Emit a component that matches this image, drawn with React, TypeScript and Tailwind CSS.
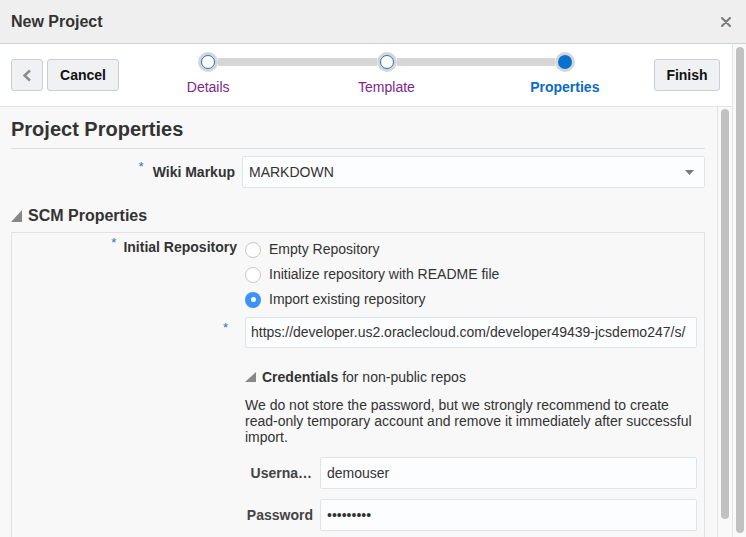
import React from "react";

function Step({ label, current, left, right }: { label: string; current?: boolean; left?: boolean; right?: boolean }) {
  return (
    <div className="flex-1 flex flex-col items-center">
      <div className="flex items-center w-full h-[20px]">
        <div className={left ? "flex-1 h-[8px] bg-[#d6d6d6]" : "flex-1 h-[8px]"} />
        <div className="w-[20px] h-[20px] rounded-full bg-[#d6d6d6] flex items-center justify-center shrink-0">
          {current ? (
            <div className="w-[14px] h-[14px] rounded-full bg-[#0572ce]" />
          ) : (
            <div className="w-[14px] h-[14px] rounded-full bg-white border-[1.5px] border-[#1b74d0]" />
          )}
        </div>
        <div className={right ? "flex-1 h-[8px] bg-[#d6d6d6]" : "flex-1 h-[8px]"} />
      </div>
      <div
        className={
          current
            ? "mt-[7px] text-[14px] leading-[16px] font-bold text-[#0a6bc2]"
            : "mt-[7px] text-[14px] leading-[16px] text-[#7d268c]"
        }
      >
        {label}
      </div>
    </div>
  );
}

function Radio({ checked, label }: { checked?: boolean; label: string }) {
  return (
    <div className="h-[25px] flex items-center">
      {checked ? (
        <div className="w-[16px] h-[16px] rounded-full bg-[#3a93f5] flex items-center justify-center">
          <div className="w-[5px] h-[5px] rounded-full bg-white" />
        </div>
      ) : (
        <div className="w-[16px] h-[16px] rounded-full bg-white border border-[#c9c9c9]" />
      )}
      <span className="ml-[8px] text-[14px] text-[#333]">{label}</span>
    </div>
  );
}

function Field({ children }: { children: React.ReactNode }) {
  return (
    <div className="flex-1 min-w-0 h-[32px] border border-[#dfe4e8] bg-[#fcfdfe] rounded-[2px] flex items-center pl-[6px] overflow-hidden whitespace-nowrap text-[14px] text-[#333]">
      {children}
    </div>
  );
}

export default function App() {
  return (
    <div className="w-[746px] h-[537px] overflow-hidden flex flex-col bg-white text-[#333] font-['Liberation_Sans',Arial,sans-serif]">
      {/* Header */}
      <div className="h-[44px] shrink-0 bg-[#efefef] border-b border-[#cbd3da] flex items-center justify-between pl-[11px] pr-[15px]">
        <span className="text-[16px] font-bold text-[#333]">New Project</span>
        <svg width="10" height="10" viewBox="0 0 10 10" className="mt-[1px]">
          <path d="M1 1 L9 9 M9 1 L1 9" stroke="#7a7a7a" strokeWidth="2" strokeLinecap="round" />
        </svg>
      </div>

      <div className="flex flex-1 min-h-0">
        <div className="flex-1 min-w-0 flex flex-col">
          {/* Toolbar */}
          <div className="h-[63px] shrink-0 bg-white border-b border-[#e2e2e2] flex items-start pl-[11px] pr-[12px]">
            <div className="mt-[15px] w-[32px] h-[32px] border border-[#c5ced6] bg-[#eff1f3] rounded-[3px] flex items-center justify-center">
              <svg width="10" height="13" viewBox="0 0 10 13">
                <path d="M8 1.5 L2.5 6.5 L8 11.5" stroke="#8a8a8a" strokeWidth="2.4" fill="none" />
              </svg>
            </div>
            <div className="mt-[15px] ml-[4px] w-[72px] h-[32px] border border-[#c5ced6] bg-[#eff1f3] rounded-[3px] flex items-center justify-center text-[14px] font-bold text-[#111]">
              Cancel
            </div>
            <div className="w-[535px] pt-[8px] flex">
              <Step label="Details" right />
              <Step label="Template" left right />
              <Step label="Properties" current left />
            </div>
            <div className="mt-[15px] w-[66px] h-[32px] border border-[#c5ced6] bg-[#eff1f3] rounded-[3px] flex items-center justify-center text-[14px] font-bold text-[#111]">
              Finish
            </div>
          </div>

          {/* Content */}
          <div className="flex flex-1 min-h-0 bg-[#f8f8f8]">
            <div className="flex-1 min-w-0 pl-[11px] pr-[12px] pt-[10px] overflow-hidden">
              <div className="text-[20px] leading-[24px] font-bold text-[#333] pb-[7px] border-b border-[#d8dfe4]">
                Project Properties
              </div>

              <div className="mt-[7px] flex items-center">
                <div className="w-[231px] pr-[7px] flex items-center justify-end">
                  <span className="text-[13px] text-[#1a73d1] mb-[10px]">*</span>
                  <span className="ml-[9px] text-[14px] font-bold text-[#333]">Wiki Markup</span>
                </div>
                <div className="flex-1 min-w-0 h-[32px] border border-[#dfe4e8] bg-[#fcfdfe] rounded-[2px] flex items-center justify-between pl-[6px] pr-[10px] text-[14px] text-[#333]">
                  <span>MARKDOWN</span>
                  <svg width="9" height="5" viewBox="0 0 9 5">
                    <path d="M0 0 L9 0 L4.5 5 Z" fill="#7a7a7a" />
                  </svg>
                </div>
              </div>

              <div className="mt-[18px] h-[20px] flex items-center">
                <svg width="11" height="12" viewBox="0 0 11 12">
                  <path d="M11 0 L11 12 L0 12 Z" fill="#888" />
                </svg>
                <span className="ml-[6px] text-[16px] font-bold text-[#333]">SCM Properties</span>
              </div>

              <div className="mt-[6px] border border-[#dfe3e6] pt-[4px] h-[400px]">
                <div className="flex items-start">
                  <div className="w-[233px] pr-[8px] h-[21px] flex items-center justify-end">
                    <span className="text-[13px] text-[#1a73d1] mb-[10px]">*</span>
                    <span className="ml-[7px] text-[14px] font-bold text-[#333]">Initial Repository</span>
                  </div>
                  <div className="flex-1 min-w-0 pr-[7px]">
                    <Radio label="Empty Repository" />
                    <Radio label="Initialize repository with README file" />
                    <Radio checked label="Import existing repository" />
                  </div>
                </div>

                <div className="mt-[5px] flex items-center">
                  <div className="w-[233px] pr-[17px] flex justify-end">
                    <span className="text-[13px] text-[#1a73d1] mb-[10px]">*</span>
                  </div>
                  <div className="flex-1 min-w-0 pr-[7px] flex">
                    <div className="flex-1 min-w-0 h-[31px] border border-[#dfe4e8] bg-[#fcfdfe] rounded-[2px] flex items-center pl-[5px] overflow-hidden whitespace-nowrap text-[14px] text-[#333]">
                      https://developer.us2.oraclecloud.com/developer49439-jcsdemo247/s/
                    </div>
                  </div>
                </div>

                <div className="flex">
                  <div className="w-[233px] shrink-0" />
                  <div className="flex-1 min-w-0 pr-[7px]">
                    <div className="mt-[21px] h-[16px] flex items-center">
                      <svg width="11" height="10" viewBox="0 0 11 10">
                        <path d="M11 0 L11 10 L0 10 Z" fill="#888" />
                      </svg>
                      <span className="ml-[6px] text-[14px] text-[#333]">
                        <span className="font-bold">Credentials</span> for non-public repos
                      </span>
                    </div>
                    <div className="mt-[12px] text-[14px] leading-[16px] text-[#333]">
                      <div className="whitespace-nowrap">We do not store the password, but we strongly recommend to create</div>
                      <div className="whitespace-nowrap">read-only temporary account and remove it immediately after successful</div>
                      <div className="whitespace-nowrap">import.</div>
                    </div>
                    <div className="mt-[12px] flex items-center">
                      <div className="w-[67px] text-right text-[14px] font-bold text-[#444] whitespace-nowrap">Userna…</div>
                      <div className="ml-[8px] flex-1 min-w-0 flex">
                        <Field>demouser</Field>
                      </div>
                    </div>
                    <div className="mt-[10px] flex items-center">
                      <div className="w-[68px] text-right text-[14px] font-bold text-[#444] whitespace-nowrap">Password</div>
                      <div className="ml-[7px] flex-1 min-w-0 flex">
                        <Field>•••••••••</Field>
                      </div>
                    </div>
                  </div>
                </div>
              </div>
            </div>

            {/* inner scrollbar */}
            <div className="w-[15px] shrink-0 border-l border-[#e4e4e4] bg-[#f9f9f9] pl-[3px] pt-[2px]">
              <div className="w-[8px] h-[410px] rounded-full bg-[#c1c1c1]" />
            </div>
          </div>
        </div>

        {/* outer scrollbar */}
        <div className="w-[14px] shrink-0 border-l border-[#e4e4e4] bg-[#f9f9f9] pl-[3px] pt-[3px]">
          <div className="w-[8px] h-[486px] rounded-full bg-[#c1c1c1]" />
        </div>
      </div>
    </div>
  );
}
